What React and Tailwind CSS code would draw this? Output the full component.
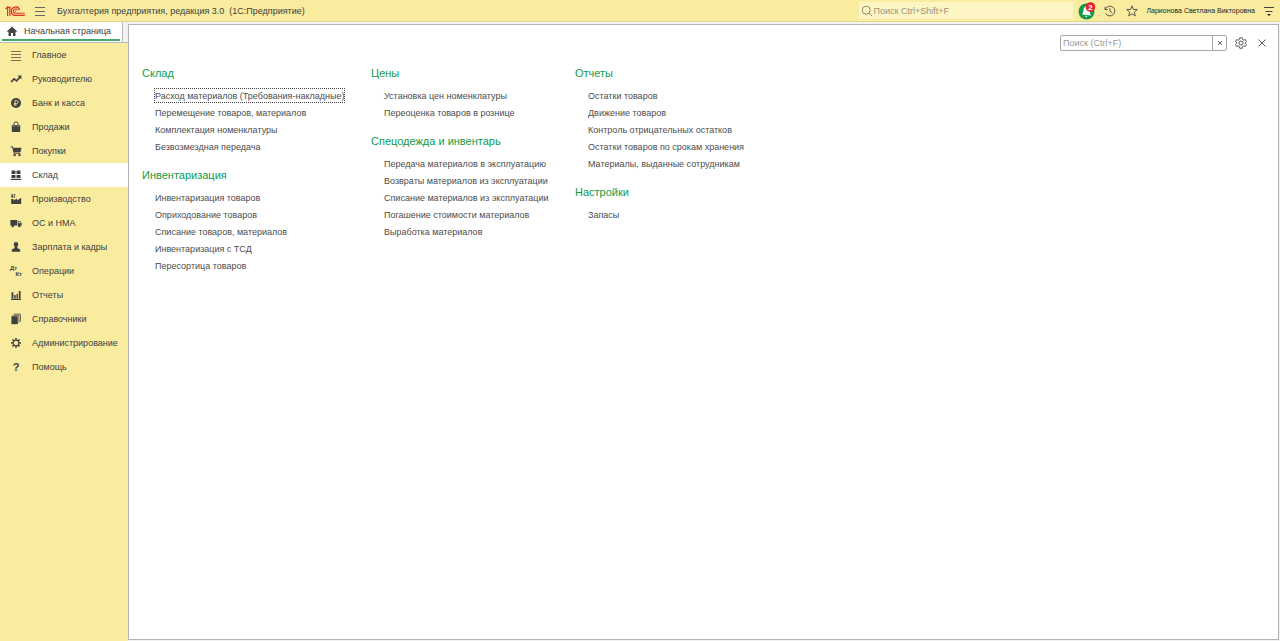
import clsx from 'clsx';

const menu = [
  { title: 'Главное', icon: 'main' },
  { title: 'Руководителю', icon: 'trend' },
  { title: 'Банк и касса', icon: 'bank' },
  { title: 'Продажи', icon: 'bag' },
  { title: 'Покупки', icon: 'cart' },
  { title: 'Склад', icon: 'stock' },
  { title: 'Производство', icon: 'factory' },
  { title: 'ОС и НМА', icon: 'truck' },
  { title: 'Зарплата и кадры', icon: 'person' },
  { title: 'Операции', icon: 'ledger' },
  { title: 'Отчеты', icon: 'chart' },
  { title: 'Справочники', icon: 'books' },
  { title: 'Администрирование', icon: 'gear' },
  { title: 'Помощь', icon: 'help' },
];

const columns = [
  [
    {
      title: 'Склад',
      links: [
        'Расход материалов (Требования-накладные)',
        'Перемещение товаров, материалов',
        'Комплектация номенклатуры',
        'Безвозмездная передача',
      ],
    },
    {
      title: 'Инвентаризация',
      links: [
        'Инвентаризация товаров',
        'Оприходование товаров',
        'Списание товаров, материалов',
        'Инвентаризация с ТСД',
        'Пересортица товаров',
      ],
    },
  ],
  [
    {
      title: 'Цены',
      links: ['Установка цен номенклатуры', 'Переоценка товаров в рознице'],
    },
    {
      title: 'Спецодежда и инвентарь',
      links: [
        'Передача материалов в эксплуатацию',
        'Возвраты материалов из эксплуатации',
        'Списание материалов из эксплуатации',
        'Погашение стоимости материалов',
        'Выработка материалов',
      ],
    },
  ],
  [
    {
      title: 'Отчеты',
      links: [
        'Остатки товаров',
        'Движение товаров',
        'Контроль отрицательных остатков',
        'Остатки товаров по срокам хранения',
        'Материалы, выданные сотрудникам',
      ],
    },
    { title: 'Настройки', links: ['Запасы'] },
  ],
];

const gearTeeth = [0, 45, 90, 135, 180, 225, 270, 315];

const shapes = {
  main: <path d="M1 2.5h10M1 5.5h10M1 8.5h10M1 11.5h10" stroke="currentColor" strokeWidth="0.7" />,
  trend: (
    <>
      <path d="M1 9l3-3.2 2.6 2L10 4" fill="none" stroke="currentColor" strokeWidth="1.7" />
      <path d="M7.6 2.6h3.8v3.8z" />
    </>
  ),
  bank: (
    <>
      <circle cx="6" cy="6" r="5" />
      <path d="M5 9V3.6h1.800a1.4 1.4 0 010 2.900H3.800M3.800 7.800h3" fill="none" stroke="#faec9e" strokeWidth="0.8" />
    </>
  ),
  bag: (
    <>
      <path d="M1.8 4.200h8.400V11H1.800z" />
      <path d="M4 6V2.800a2 2 0 014 0V6" fill="none" stroke="currentColor" />
      <path d="M4 4.500V6M8 4.500V6" stroke="#faec9e" strokeWidth="0.6" />
    </>
  ),
  cart: (
    <>
      <path d="M0.6 1.8h1.9l1.6 6.4h6.2" fill="none" stroke="currentColor" />
      <path d="M2.7 2.8h8.9l-1.2 4.4H3.8z" />
      <circle cx="4.6" cy="10" r="1.2" />
      <circle cx="9.5" cy="10" r="1.2" />
    </>
  ),
  stock: <path d="M1.5 1.5h4v3.6h-4zM6.5 1.5h4v3.6h-4zM1.5 5.9h4v3.4h-4zM6.5 5.9h4v3.4h-4zM0.8 9.9h10.4v1H0.8z" />,
  factory: (
    <>
      <path d="M1.2 11V6h2.4v1.600L7 5.600v2L11.200 4.800V11z" />
      <path d="M1.4 1.2h1.5v3.6H1.4zM3.7 1.2h1.7v1H3.7zM3.7 2.8h1.2v2H3.7z" />
    </>
  ),
  truck: (
    <>
      <path d="M0.4 3h6.8v5.6H0.4zM7.8 4.2h2.4l1.5 2v2.4H7.8z" />
      <circle cx="2.8" cy="9" r="1.3" />
      <circle cx="9.4" cy="9" r="1.3" />
      <path d="M8.6 5h1.3l0.8 1.2H8.6z" fill="#faec9e" />
    </>
  ),
  person: (
    <>
      <circle cx="6" cy="3.4" r="2.3" />
      <path d="M1.8 10.8V8.6L4.4 7.2 4.9 5h2.2l0.5 2.2 2.6 1.4v2.2z" />
    </>
  ),
  chart: <path d="M1.5 3.2h1.9v6.6H1.5zM4.2 6h1.5v3.8H4.2zM6.5 4.8h1.4v5H6.5zM8.8 2h1.8v7.8H8.8zM1 10h10v1H1z" />,
  books: (
    <>
      <path d="M1.4 3.2h6.4v8H1.4z" />
      <path d="M2.6 2.3h6.3v7.6M4 1.1h6.4v7.6" fill="none" stroke="currentColor" strokeWidth="0.8" />
    </>
  ),
  gear: (
    <>
      <circle cx="6" cy="6" r="2.9" fill="none" stroke="currentColor" strokeWidth="1.3" />
      {gearTeeth.map((a) => (
        <path key={a} d="M5.2 1h1.6v1.8H5.2z" transform={`rotate(${a} 6 6)`} />
      ))}
    </>
  ),
};

const MenuIcon = ({ name }) => {
  if (name === 'help') {
    return <span className="w-3 text-center text-[11px] leading-3 font-bold">?</span>;
  }
  if (name === 'ledger') {
    return (
      <span className="w-3 flex flex-col text-[6px] leading-[6px] font-bold">
        <span>Дт</span>
        <span className="self-end">Кт</span>
      </span>
    );
  }
  return (
    <svg className="w-3 h-3 shrink-0" viewBox="0 0 12 12" fill="currentColor">
      {shapes[name]}
    </svg>
  );
};

const Logo = () => (
  <svg className="w-5 h-3" viewBox="0 0 20 12" fill="none" stroke="#e0302a" aria-label="1С">
    <path d="M0.6 4L2.600 2.200v8.800M2.600 2.300h2.300V11" strokeWidth="1.2" />
    <path d="M14.600 5A4.200 4.200 0 1010.600 10.400H19.800" strokeWidth="1.2" />
    <path d="M12.600 5.400A2.200 2.200 0 1010.600 8.300H19.800" strokeWidth="1.1" />
    <circle cx="10.500" cy="6.200" r="0.7" fill="#e0302a" stroke="none" />
  </svg>
);

const Header = () => (
  <header className="h-[22px] flex items-center bg-[#faec9e] border-b border-[#e2d68f] px-[5px] text-[#404040]">
    <Logo />
    <button type="button" aria-label="Меню" className="ml-[9px]">
      <svg className="w-3 h-3" viewBox="0 0 12 12" stroke="#666" fill="none">
        <path d="M1 2.500h10M1 6.500h10M1 10.500h10" />
      </svg>
    </button>
    <h1 className="ml-[11px] text-[9px] leading-3 whitespace-pre">
      Бухгалтерия предприятия, редакция 3.0  (1С:Предприятие)
    </h1>

    <label className="ml-auto w-[214px] h-[17px] flex items-center bg-[#fdf5c4] px-[2px]">
      <svg className="w-3 h-3 shrink-0" viewBox="0 0 12 12" fill="none" stroke="#8b8668">
        <circle cx="5.2" cy="5.2" r="4" />
        <path d="M8.2 8.2l3 3" />
      </svg>
      <input
        type="search"
        aria-label="Глобальный поиск"
        placeholder="Поиск Ctrl+Shift+F"
        className="min-w-0 flex-1 text-[9px] leading-3 outline-none placeholder:text-[#99937a]"
      />
    </label>
    <button type="button" aria-label="Уведомления" className="ml-[5px]">
      <svg className="w-[18px] h-[18px]" viewBox="0 0 18 18">
        <circle cx="8.5" cy="9.5" r="8" fill="#119a4c" />
        <path d="M8.4 4.2c-2.3.5-2.9 2.3-3 4.6l-1.2 3.8 8.8.9-1.1-2.6.3-3zM6.8 13.7l3 .4-1.7 1.2z" fill="#fff" />
        <circle cx="12.5" cy="5" r="4.8" fill="#e8232b" />
        <text x="12.5" y="8" textAnchor="middle" fontSize="8" fontWeight="bold" fill="#fff">2</text>
      </svg>
    </button>
    <button type="button" aria-label="История" className="ml-2">
      <svg className="w-3 h-3" viewBox="0 0 12 12" fill="none" stroke="#4a4a4a" strokeWidth="0.9">
        <path d="M1.4 4.2A4.9 4.9 0 111.6 8.3M1 1.8v2.8h2.8M6 3.2v3l2.4 1.6" />
      </svg>
    </button>
    <button type="button" aria-label="Избранное" className="ml-[10px]">
      <svg className="w-3 h-3" viewBox="0 0 12 12" fill="none" stroke="#4a4a4a" strokeWidth="0.9">
        <path d="M6 .9l1.4 3.500 3.900.2-3 2.400 1 3.900L6 8.800l-3.300 2.100 1-3.900-3-2.400 3.900-.2z" />
      </svg>
    </button>
    <button type="button" className="ml-2 text-[7px] leading-3 text-[#222] whitespace-nowrap">
      Ларионова Светлана Викторовна
    </button>
    <button type="button" aria-label="Сервис и настройки" className="ml-2">
      <svg className="w-3 h-3" viewBox="0 0 12 12" fill="none" stroke="#444">
        <path d="M1 2.500h10M2.500 6.500h7" />
        <path d="M4 9h4l-2 2z" fill="#222" stroke="none" />
      </svg>
    </button>
  </header>
);

const Sidebar = () => (
  <aside className="w-32 shrink-0 flex flex-col">
    <div className="h-[21px] flex border-b border-[#b9b9b9]">
      <a
        href="#home"
        className="w-[123px] flex items-center bg-white border-r border-[#b9b9b9] px-[2px] text-[9px] leading-3 text-[#404040]"
      >
        <span className="h-[19px] self-start flex-1 flex items-center border-b-2 border-[#3cab6c] pl-1">
          <svg className="w-3 h-3 mr-[6px]" viewBox="0 0 12 12" fill="#444">
            <path d="M6 1.400l5 4.800-.9.800-.6-.5V11H7V8H5v3H2.500V6.500l-.6.500-.9-.800z" />
          </svg>
          Начальная страница
        </span>
      </a>
    </div>
    <nav className="flex-1 bg-[#faec9e]">
      {menu.map((item) => (
        <a
          key={item.title}
          href="#section"
          className={clsx(
            'h-6 flex items-center gap-[10px] pl-[10px] text-[9px] leading-3 text-[#404040] whitespace-nowrap',
            item.title === 'Склад' && 'bg-white'
          )}
        >
          <MenuIcon name={item.icon} />
          {item.title}
        </a>
      ))}
    </nav>
  </aside>
);

const PanelTools = () => (
  <div className="flex items-center justify-end pt-[10px] pr-[10px]">
    <div className="w-[167px] h-4 flex border border-[#a8a8a8] rounded-[2px]">
      <input
        type="search"
        aria-label="Поиск по разделу"
        placeholder="Поиск (Ctrl+F)"
        className="min-w-0 flex-1 px-[2px] text-[9px] leading-3 outline-none placeholder:text-[#9a9a9a]"
      />
      <button
        type="button"
        aria-label="Очистить"
        className="w-[14px] flex items-center justify-center border-l border-[#a8a8a8]"
      >
        <svg className="w-1 h-1" viewBox="0 0 4 4" stroke="#666">
          <path d="M0 0l4 4M4 0L0 4" />
        </svg>
      </button>
    </div>
    <button type="button" aria-label="Настройка" className="ml-2">
      <svg className="w-3 h-3" viewBox="0 0 24 24" fill="none" stroke="#555" strokeWidth="2">
        <circle cx="12" cy="12" r="4" />
        <path d="M9.5 1.5h5l.6 3.4 2.4 1.4 3.2-1.2 2.3 4-2.6 2.2v1.4l2.6 2.2-2.3 4-3.2-1.2-2.4 1.4-.6 3.4h-5l-.6-3.4-2.4-1.4-3.2 1.2-2.3-4 2.6-2.2v-1.4L1 9.1l2.3-4 3.2 1.2 2.4-1.4z" />
      </svg>
    </button>
    <button type="button" aria-label="Закрыть" className="ml-[9px]">
      <svg className="w-3 h-3" viewBox="0 0 12 12" stroke="#555">
        <path d="M2.5 2.5l7 7M9.5 2.5l-7 7" />
      </svg>
    </button>
  </div>
);

const Section = ({ title, links }) => (
  <section>
    <h2 className="text-[11px] leading-4 text-[#119a4c]">{title}</h2>
    <ul className="mt-[6px] pl-3">
      {links.map((link) => (
        <li key={link} className="h-[17px] flex items-center">
          <a
            href="#document"
            className={clsx(
              'h-[15px] border text-[9px] leading-[14px] whitespace-nowrap text-[#4d4d4d]',
              link.startsWith('Расход') ? 'border-dotted border-[#444]' : 'border-transparent'
            )}
          >
            {link}
          </a>
        </li>
      ))}
    </ul>
  </section>
);

const App = () => {
  return (
    <div className="min-h-screen flex flex-col bg-[#f2f2f2] font-['Liberation_Sans',Arial,sans-serif]">
      <Header />
      <div className="flex-1 flex">
        <Sidebar />
        <main className="flex-1 mt-[2px] mr-px mb-px bg-white border border-[#b3b3b3]">
          <PanelTools />
          <div className="flex items-start pl-[13px] pt-[14px]">
            {columns.map((sections) => (
              <div key={sections[0].title} className="nth-[1]:w-[229px] nth-[2]:w-[204px] flex flex-col gap-3">
                {sections.map((section) => (
                  <Section key={section.title} {...section} />
                ))}
              </div>
            ))}
          </div>
        </main>
      </div>
    </div>
  );
};

export default App;
